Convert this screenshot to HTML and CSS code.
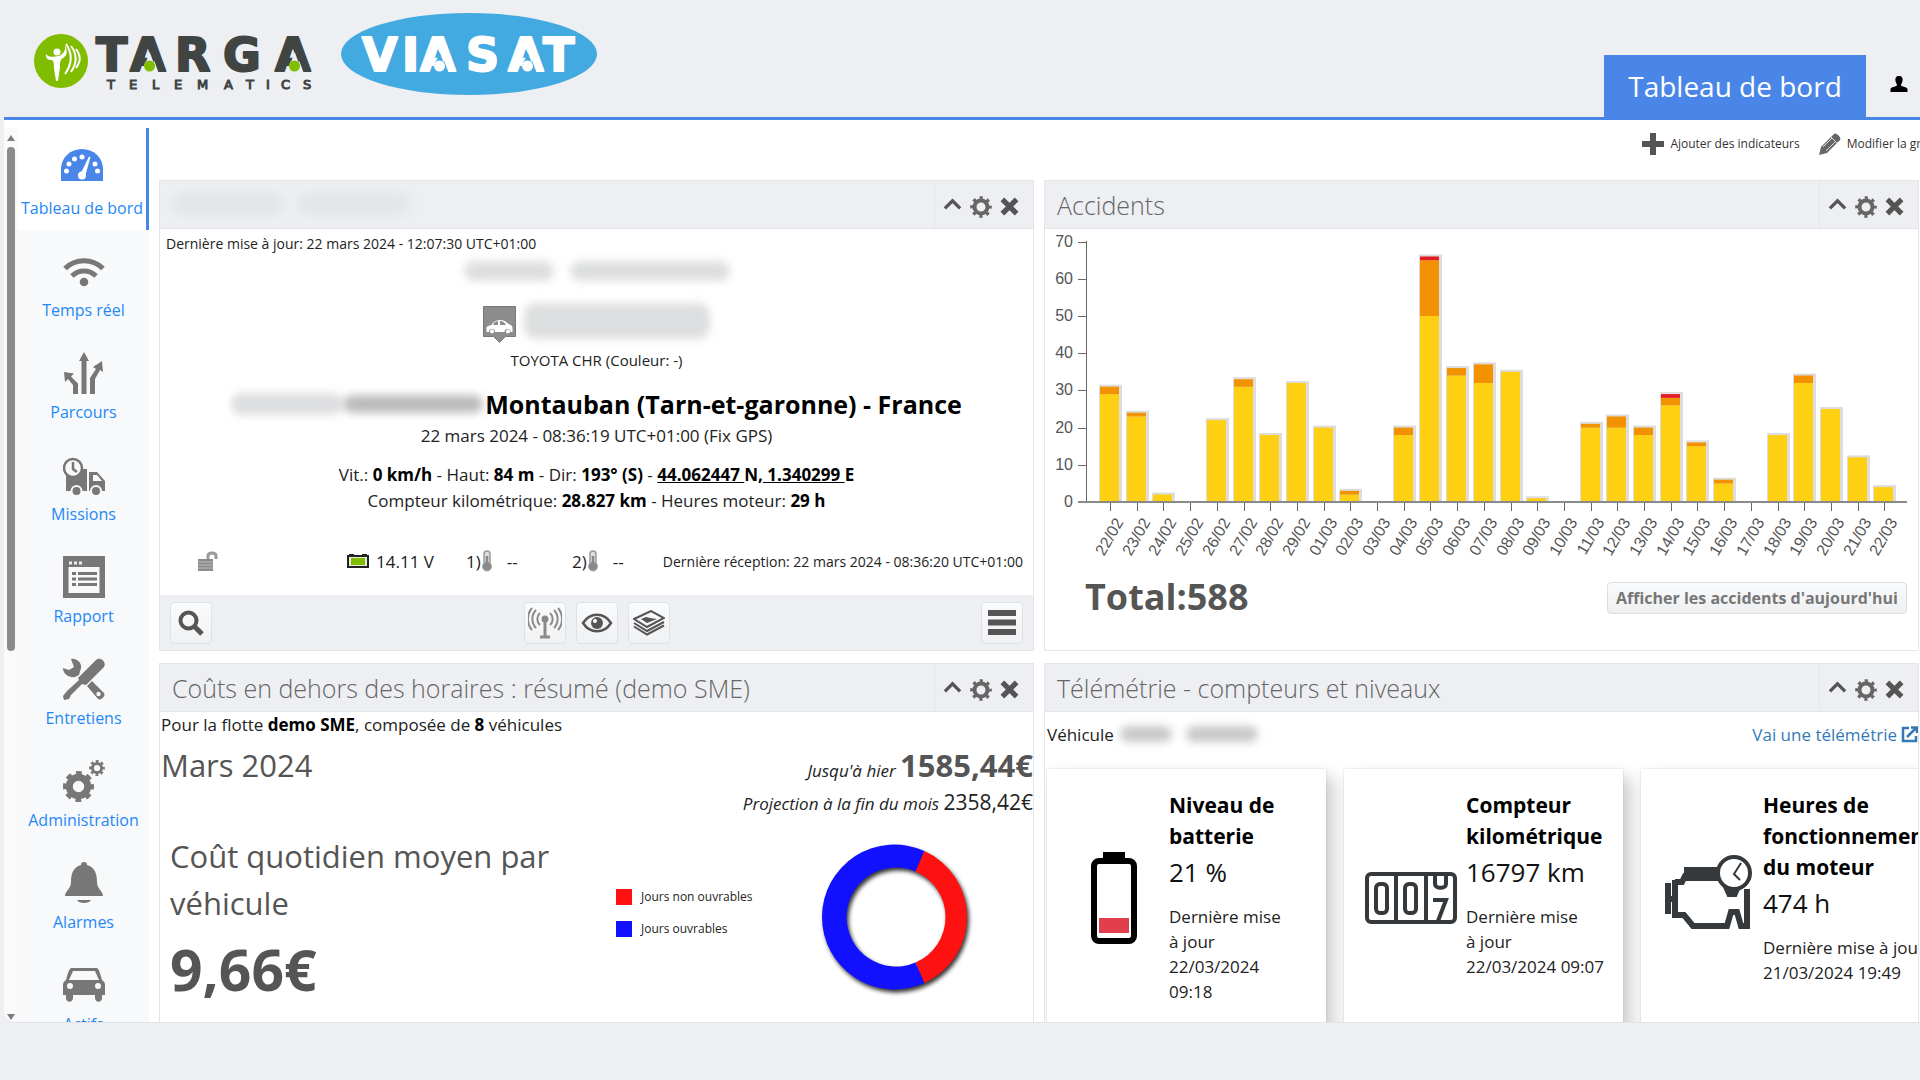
FILE: index.html
```html
<!DOCTYPE html>
<html lang="fr">
<head>
<meta charset="utf-8">
<title>Tableau de bord</title>
<link rel="stylesheet" href="styles.css">
</head>
<body>
<svg class="sprite" aria-hidden="true">
  <symbol id="i-up" viewBox="0 0 20 20"><path d="M2 12l8-8 8 8" fill="none" stroke="#555" stroke-width="3.500"/></symbol>
  <symbol id="i-close" viewBox="0 0 20 20"><path d="M2.500 2.500l15 15M17.500 2.500l-15 15" fill="none" stroke="#555" stroke-width="5.500"/></symbol>
  <symbol id="i-gear" viewBox="0 0 22 22"><circle cx="11" cy="11" r="6.500" fill="none" stroke="#666" stroke-width="4"/><circle cx="11" cy="11" r="9.300" fill="none" stroke="#666" stroke-width="3" stroke-dasharray="3.200 4.100" stroke-dashoffset="1.600"/></symbol>
  <symbol id="i-therm" viewBox="0 0 12 22"><rect x="3" y="1" width="6" height="15" rx="3" fill="#ddd" stroke="#999" stroke-width="1.500"/><circle cx="6" cy="16.500" r="4.500" fill="#888" stroke="#aaa"/><path d="M6 6v10" stroke="#888" stroke-width="2.500"/></symbol>
</svg>

<header class="topbar">
  <svg class="logos" viewBox="0 0 600 100" role="img" aria-label="Targa Telematics Viasat">
    <circle cx="61" cy="61" r="27" fill="#80bc00"/>
    <circle cx="57" cy="52" r="3.500" fill="#fff"/>
    <path d="M46 54c-1 5 3 6 6 6c2 1 2 5 2 9l2 12h2l2-14c0-5 0-7 3-9c4-2 5-7 2-13c1 6-2 9-6 11c-5 1-9 1-11 0z" fill="#fff"/>
    <path d="M66 44c7 10 6 20-1 30M71 46c7 9 6 17 0 26M76 49c5 7 5 12 0 19" fill="none" stroke="#fff" stroke-width="2"/>
    <text class="logo-word dark" x="96 130 175 223 275" y="71">TARGA</text>
    <path d="M141.500 72.500l4-11h9l4 11zM286.500 72.500l4-11h9l4 11zM146 62l3.700-10 3.700 10zM291 62l3.700-10 3.700 10z" fill="#edeff2"/>
    <circle cx="149.500" cy="66" r="5.500" fill="#80bc00"/><circle cx="294.500" cy="66" r="5.500" fill="#80bc00"/>
    <text class="logo-sub" x="107 129 152 174 197 224 246 266 281 303" y="89">TELEMATICS</text>
    <ellipse cx="469" cy="54" rx="128" ry="41" fill="#42a9e1"/>
    <text class="logo-word light" x="362 402 420 466 508 543" y="71">VIASAT</text>
    <path d="M431.500 72.500l4-11h9l4 11zM519.500 72.500l4-11h9l4 11zM436 62l3.700-10 3.700 10zM524 62l3.700-10 3.700 10z" fill="#42a9e1"/>
    <circle cx="439.500" cy="66" r="5.500" fill="#fff"/><circle cx="527.500" cy="66" r="5.500" fill="#fff"/>
  </svg>
  <nav class="topnav">
    <a class="tab" href="#dashboard">Tableau de bord</a>
    <button class="user" aria-label="Utilisateur"><svg width="18" height="18" viewBox="0 0 18 18"><path d="M9 1c3 0 4 2 3.500 5c-.3 2-1.500 3-1.500 4c0 2 6 1.500 6.500 4v3h-17v-3c.5-2.500 6.500-2 6.500-4c0-1-1.200-2-1.500-4C5 3 6 1 9 1z" fill="#000"/></svg></button>
  </nav>
</header>

<main class="app">
  <aside class="side">
    <div class="scroll"><span class="arrow up"></span><span class="thumb"></span><span class="arrow down"></span></div>
    <nav class="menu">
      <a class="item active" href="#dashboard"><svg viewBox="0 0 42 42" fill="#4a86e8"><path d="M0 33V21a21 20 0 0 1 42 0v12z"/><g fill="#fff"><circle cx="5.500" cy="23" r="2.500"/><circle cx="8" cy="16" r="2.500"/><circle cx="13.500" cy="11" r="2.500"/><circle cx="21" cy="9" r="2.500"/><circle cx="34" cy="16" r="2.500"/><circle cx="36.500" cy="23" r="2.500"/><path d="M28 8.500l1.500.5-5 18-5-1z"/><circle cx="21" cy="27.500" r="4"/></g></svg><span>Tableau de bord</span></a>
      <a class="item" href="#live"><svg viewBox="0 0 42 42" fill="none" stroke="#777" stroke-width="5"><path d="M2 18.500a27 27 0 0 1 38 0M9 26a17 17 0 0 1 24 0"/><circle cx="21" cy="32" r="4.300" fill="#777" stroke="none"/></svg><span>Temps réel</span></a>
      <a class="item" href="#trips"><svg viewBox="0 0 42 42" fill="#777"><path d="M18.500 42V9H16l5-9 5 9h-2.500v33zM10 42V33L5 27l-3 3-1-10 10 1.500-3 3 7 7V42zM27 42V26l6-9-3-2 9-6 1 11-3-2-5 9v15z"/></svg><span>Parcours</span></a>
      <a class="item" href="#missions"><svg viewBox="0 0 42 42" fill="#777"><path d="M3 15h21v22H3zM26 18h8l8 9v10H26z"/><path d="M30 21h4l5 6h-9z" fill="#f8f9fa"/><circle cx="10" cy="14" r="9" fill="#f8f9fa" stroke="#777" stroke-width="2.500"/><path d="M10 8v7l4 3" fill="none" stroke="#777" stroke-width="2.500"/><circle cx="13.500" cy="37" r="5" stroke="#f8f9fa" stroke-width="2"/><circle cx="33" cy="37" r="5" stroke="#f8f9fa" stroke-width="2"/></svg><span>Missions</span></a>
      <a class="item" href="#report"><svg viewBox="0 0 42 42" fill="#777"><path d="M0 0h42v42H0z"/><path d="M5.500 11h31v26h-31z" fill="#f8f9fa"/><path d="M6 5.500h3v3H6zM11 5.500h3v3h-3zM16 5.500h3v3h-3z" fill="#eee"/><path d="M9 16h4v3H9zM15 16h19v3H15zM9 21.500h4v3H9zM15 21.500h19v3H15zM9 27h4v3H9zM15 27h19v3H15z"/></svg><span>Rapport</span></a>
      <a class="item" href="#service"><svg viewBox="0 0 42 42" fill="#777"><path d="M8 1c6-1 11 4 10 9l-2 7-4 2C6 20 0 16 0 10l6 2 5-3zM24 28l5-5 12 12c2 3-3 8-6 6z"/><circle cx="35.500" cy="36" r="2.200" fill="#f8f9fa"/><path d="M15 20L33 2c4-4 11 2 8 7L23 27l-4-1L8 37l-2 4-5 1-1-4 4-5 12-11z"/></svg><span>Entretiens</span></a>
      <a class="item" href="#admin"><svg viewBox="0 0 42 42" fill="none" stroke="#777"><circle cx="15.500" cy="26.500" r="9.200" stroke-width="7"/><circle cx="15.500" cy="26.500" r="13" stroke-width="5" stroke-dasharray="5.500 4.710" stroke-dashoffset="2.750"/><circle cx="34" cy="8" r="4.600" stroke-width="3"/><circle cx="34" cy="8" r="6.600" stroke-width="2.600" stroke-dasharray="2.800 2.380" stroke-dashoffset="1.400"/></svg><span>Administration</span></a>
      <a class="item" href="#alarms"><svg viewBox="0 0 42 42" fill="#777"><path d="M21 0c2 0 3 1 3 3c8 2 10 9 10 17c0 7 6 9 6 14H2c0-5 6-7 6-14c0-8 2-15 10-17c0-2 1-3 3-3zM14 38h14c-2 4-12 4-14 0z"/></svg><span>Alarmes</span></a>
      <a class="item" href="#assets"><svg viewBox="0 0 42 42" fill="#777"><path d="M9 4h24c2 0 3 1 6 12c2 1 3 3 3 5v10h-3v3c0 5-7 5-7 0v-3H10v3c0 5-7 5-7 0v-3H0V21c0-2 1-4 3-5C6 5 7 4 9 4z"/><path d="M10 7h22l4 9H6z" fill="#f8f9fa"/><circle cx="7" cy="22" r="3" fill="#f8f9fa"/><circle cx="35" cy="22" r="3" fill="#f8f9fa"/></svg><span>Actifs</span></a>
    </nav>
  </aside>

  <div class="content">
    <div class="tools">
      <a href="#add"><svg width="22" height="22" viewBox="0 0 22 22"><path d="M8 0h6v8h8v6h-8v8H8v-8H0V8h8z" fill="#555"/></svg>Ajouter des indicateurs</a>
      <a class="edit" href="#grid"><svg width="22" height="22" viewBox="0 0 22 22"><path d="M0 22l2-8L15 1c2-2 8 4 6 6L8 20z" fill="#666"/><path d="M12 4l6 6M4 14l9-9M7 18l9-9" stroke="#ddd" fill="none"/></svg>Modifier la grille</a>
    </div>

    <div class="grid">
      <section class="card">
        <div class="head"><h2 class="masked"><i class="smudge"></i><i class="smudge"></i></h2><div class="acts"><button aria-label="Réduire"><svg><use href="#i-up"/></svg></button><button aria-label="Configurer"><svg class="gear"><use href="#i-gear"/></svg></button><button aria-label="Fermer"><svg><use href="#i-close"/></svg></button></div></div>
        <p class="updated">Dernière mise à jour: 22 mars 2024 - 12:07:30 UTC+01:00</p>
        <div class="hidden-name"><i class="smudge s-short"></i><i class="smudge"></i></div>
        <div class="plate"><svg width="33" height="38" viewBox="0 0 33 38"><path d="M.5.500h32v30h-10l-6 6-6-6H.500z" fill="#8d8d8d" stroke="#777"/><path d="M3.500 26v-4c0-2 2-2 5-3c3-6 12-7 17-1c3 1 4 2 4 4v4h-2a3 3 0 0 0-6 0H12a3 3 0 0 0-6 0z" fill="#fff"/><path d="M10 19c1-3 3-4 5-4v4zM17 15c3 0 4 1 6 4h-6z" fill="#8d8d8d"/><circle cx="9" cy="25.500" r="2" fill="#fff"/><circle cx="25" cy="25.500" r="2" fill="#fff"/></svg><i class="smudge"></i></div>
        <p class="model">TOYOTA CHR (Couleur: -)</p>
        <div class="address"><i class="smudge s-a"></i><i class="smudge s-b"></i><strong>Montauban (Tarn-et-garonne) - France</strong></div>
        <p class="fix">22 mars 2024 - 08:36:19 UTC+01:00 (Fix GPS)</p>
        <p class="stats">Vit.: <b>0 km/h</b> - Haut: <b>84 m</b> - Dir: <b>193° (S)</b> - <b><u>44.062447 </u>N,<u> 1.340299 </u>E</b><br>Compteur kilométrique: <b>28.827 km</b> - Heures moteur: <b>29 h</b></p>
        <div class="sensors">
          <span class="lock"><svg width="22" height="20" viewBox="0 0 22 20"><path d="M1 8h15v12H1z" fill="#8c8c8c"/><path d="M1 11h15M1 14h15M1 17h15" stroke="#bbb"/><path d="M11 8V5c0-4 8-4 8 0v3" fill="none" stroke="#999" stroke-width="3"/></svg></span>
          <span class="volt"><svg width="22" height="14" viewBox="0 0 22 14"><path d="M2 0h5v1h8V0h5v1h2v13H0V1h2z" fill="#222"/><path d="M2 3h18v9H2z" fill="#e8efd8"/><path d="M4 4h14v7H4z" fill="#80bc00"/></svg>14.11 V</span>
          <span class="temp">1)<svg><use href="#i-therm"/></svg><em>--</em></span>
          <span class="temp">2)<svg><use href="#i-therm"/></svg><em>--</em></span>
          <span class="recv">Dernière réception: 22 mars 2024 - 08:36:20 UTC+01:00</span>
        </div>
        <div class="foot">
          <button aria-label="Rechercher"><svg width="28" height="28" viewBox="0 0 28 28" fill="none" stroke="#555"><circle cx="11.500" cy="11.500" r="8" stroke-width="4"/><path d="M17 17l8 8" stroke-width="5"/></svg></button>
          <div class="mid">
            <button aria-label="Signal"><svg width="34" height="32" viewBox="0 0 34 32" fill="none" stroke="#8a8a8a" stroke-width="2"><path d="M17 13v16M12 30h10" stroke-width="3"/><circle cx="17" cy="12" r="2.500" fill="#888"/><path d="M12 18a8 8 0 0 1 0-12M22 18a8 8 0 0 0 0-12M8 21a13 13 0 0 1 0-18M26 21a13 13 0 0 0 0-18M4 23a17 17 0 0 1 0-22M30 23a17 17 0 0 0 0-22"/></svg></button>
            <button aria-label="Voir"><svg width="32" height="22" viewBox="0 0 32 22"><path d="M2 11c7-11 21-11 28 0c-7 11-21 11-28 0z" fill="none" stroke="#555" stroke-width="2.500"/><circle cx="16" cy="11" r="6" fill="#555"/><circle cx="14" cy="9" r="2" fill="#fff"/></svg></button>
            <button aria-label="Couches"><svg width="32" height="26" viewBox="0 0 32 26" fill="none" stroke="#555" stroke-width="2"><path d="M1 9l17-8 13 7-17 9z"/><path d="M1 13l13 8 17-9M1 16.500l13 8 17-9"/><path d="M8 9l5-2 4 1 7 1-10 4z" fill="#555" stroke="none"/></svg></button>
          </div>
          <button aria-label="Menu"><svg width="28" height="25" viewBox="0 0 28 25"><path d="M0 0h28v6H0zM0 9.500h28v6H0zM0 19h28v6H0z" fill="#555"/></svg></button>
        </div>
      </section>

      <section class="card">
        <div class="head"><h2>Accidents</h2><div class="acts"><button aria-label="Réduire"><svg><use href="#i-up"/></svg></button><button aria-label="Configurer"><svg class="gear"><use href="#i-gear"/></svg></button><button aria-label="Fermer"><svg><use href="#i-close"/></svg></button></div></div>
        <svg class="chart" id="chart" viewBox="0 0 873 344" role="img" aria-label="Accidents par jour"></svg>
        <div class="total"><strong>Total:588</strong><button>Afficher les accidents d'aujourd'hui</button></div>
      </section>

      <section class="card">
        <div class="head"><h2>Coûts en dehors des horaires : résumé (demo SME)</h2><div class="acts"><button aria-label="Réduire"><svg><use href="#i-up"/></svg></button><button aria-label="Configurer"><svg class="gear"><use href="#i-gear"/></svg></button><button aria-label="Fermer"><svg><use href="#i-close"/></svg></button></div></div>
        <p class="fleet">Pour la flotte <b>demo SME</b>, composée de <b>8</b> véhicules</p>
        <div class="month"><span class="name">Mars 2024</span><div class="sums"><p class="now"><i>Jusqu'à hier</i> <strong>1585,44€</strong></p><p class="proj"><i>Projection à la fin du mois</i> <span>2358,42€</span></p></div></div>
        <div class="daily">
          <div class="avg"><p>Coût quotidien moyen par véhicule</p><strong>9,66€</strong></div>
          <ul class="legend"><li><i class="red"></i>Jours non ouvrables</li><li><i class="blue"></i>Jours ouvrables</li></ul>
          <svg class="donut" width="160" height="160" viewBox="0 0 160 160"><path d="M108.500 14A72.500 72.500 0 1 0 108.500 146L99.500 125.500A49.500 49.500 0 1 1 99.500 34.500z" fill="#1111ff"/><path d="M108.500 14A72.500 72.500 0 0 1 108.500 146L99.500 125.500A49.500 49.500 0 0 0 99.500 34.500z" fill="#ff1111"/></svg>
        </div>
      </section>

      <section class="card">
        <div class="head"><h2>Télémétrie - compteurs et niveaux</h2><div class="acts"><button aria-label="Réduire"><svg><use href="#i-up"/></svg></button><button aria-label="Configurer"><svg class="gear"><use href="#i-gear"/></svg></button><button aria-label="Fermer"><svg><use href="#i-close"/></svg></button></div></div>
        <div class="vehicle"><span>Véhicule</span><i class="smudge s-v1"></i><i class="smudge s-v2"></i><a href="#telemetry">Vai une télémétrie<svg width="17" height="17" viewBox="0 0 17 17" fill="none" stroke="#337ab7" stroke-width="2.500"><path d="M8 2H2v13h13V10M6 11L15 2M10 1.500h6V7"/></svg></a></div>
        <div class="meters">
          <article class="meter">
            <div class="pic"><svg width="46" height="92" viewBox="0 0 46 92"><path d="M12 0h22v8H12z"/><rect x="3" y="9" width="40" height="80" rx="5" fill="#fff" stroke="#000" stroke-width="6"/><path d="M8 66h30v15H8z" fill="#e23f4c"/></svg></div>
            <div class="txt"><h3>Niveau de batterie</h3><p class="val">21 %</p><p>Dernière mise à jour 22/03/2024 09:18</p></div>
          </article>
          <article class="meter">
            <div class="pic"><svg width="92" height="52" viewBox="0 0 92 52" fill="none" stroke="#35393c" stroke-width="4"><rect x="2" y="2" width="88" height="48" rx="4"/><path d="M31 2v48M61 2v48"/><rect x="11" y="12" width="11" height="29" rx="4"/><rect x="40" y="12" width="11" height="29" rx="4"/><path d="M70 3v9c0 5 11 5 11 0V3M68 28h13l-8 21"/></svg></div>
            <div class="txt mid-txt"><h3>Compteur kilométrique</h3><p class="val">16797 km</p><p>Dernière mise<br>à jour<br>22/03/2024 09:07</p></div>
          </article>
          <article class="meter">
            <div class="pic engine"><svg width="88" height="74" viewBox="0 0 88 74" fill="none" stroke="#35393c" stroke-width="6"><path d="M4 28v31M4 44h7M11 25v35h9l9 11h34l4-14h6l4 14h6V34M11 27h7l3-6h33M20 15h36"/><path d="M20 22h34" stroke-width="8"/><path d="M60 32h16l-4 9h-8z" fill="#35393c" stroke-width="2"/><circle cx="70" cy="18" r="16" fill="#fff" stroke-width="4"/><path d="M77 8l-7 11 6 6" stroke-width="2"/></svg></div>
            <div class="txt wide"><h3>Heures de fonctionnement du moteur</h3><p class="val">474 h</p><p>Dernière mise à jour 21/03/2024 19:49</p></div>
          </article>
        </div>
      </section>
    </div>
  </div>
</main>
<script src="chart.js"></script>
</body>
</html>
```
FILE: styles.css
```css
* { box-sizing: border-box; }
body {
  margin: 0;
  height: 100vh;
  display: flex;
  flex-direction: column;
  overflow: hidden;
  padding-bottom: 57px;
  background: #edeff2;
  color: #222;
  font-family: "Open Sans", "Noto Sans", sans-serif;
  font-size: 17px;
  line-height: 25px;
}
p, h2, h3, ul { margin: 0; padding: 0; }
button { font: inherit; padding: 0; border: 0; background: none; }
a { color: inherit; text-decoration: none; }
svg { display: block; flex: none; }
.sprite { position: absolute; width: 0; height: 0; }

.topbar {
  flex: none;
  display: flex;
  justify-content: space-between;
  align-items: flex-end;
  height: 120px;
  margin-left: 4px;
  border-bottom: 3px solid #4a86e8;
}
.logos { width: 600px; height: 100px; align-self: flex-start; margin-left: -4px; }
.logo-word { font: bold 46px "DejaVu Sans", sans-serif; stroke-width: 2px; stroke-linejoin: round; }
.logo-word.dark { fill: #404443; stroke: #404443; }
.logo-word.light { fill: #fff; stroke: #fff; }
.logo-sub { font: 13px "DejaVu Sans", sans-serif; fill: #404443; stroke: #404443; }
.topnav { display: flex; align-items: center; }
.tab {
  width: 262px;
  padding: 12px 0;
  text-align: center;
  background: #4a86e8;
  color: #fff;
  font-size: 28px;
  line-height: 38px;
}
.user { padding: 0 12px 4px 24px; }

.app {
  flex: 1;
  min-height: 0;
  display: flex;
  overflow: hidden;
  margin-left: 4px;
  background: #fff;
  border-bottom: 1px solid #e2e3e5;
  border-bottom-left-radius: 10px;
}
.side { flex: none; display: flex; padding-top: 8px; }
.scroll {
  width: 14px;
  display: flex;
  flex-direction: column;
  align-items: center;
  padding: 7px 0 2px;
  background: #fafafa;
}
.arrow { border: 4px solid transparent; }
.arrow.up { border-bottom: 6px solid #7d7d7d; border-top: 0; margin-bottom: 6px; }
.arrow.down { border-top: 6px solid #7d7d7d; border-bottom: 0; margin-top: auto; }
.thumb { width: 8px; height: 57%; border-radius: 4px; background: #8b8b8b; }
.menu { width: 131px; overflow: hidden; background: #f8f9fa; }
.item {
  display: flex;
  flex-direction: column;
  align-items: center;
  gap: 6px;
  height: 102px;
  padding-top: 20px;
  color: #1e88f7;
  font-size: 16px;
  line-height: 24px;
  white-space: nowrap;
}
.item svg { width: 42px; height: 42px; }
.item.active { background: #fff; border-right: 3px solid #4a86e8; }

.content { flex: 1; min-width: 0; padding: 0 1px 0 10px; }
.tools {
  display: flex;
  justify-content: flex-end;
  gap: 19px;
  height: 60px;
  padding-top: 12px;
  margin-right: -18px;
  color: #333;
  font-size: 12px;
  line-height: 24px;
  white-space: nowrap;
}
.tools a { display: flex; align-items: center; gap: 6px; height: 24px; }

.grid { display: grid; grid-template-columns: minmax(0, 1fr) minmax(0, 1fr); gap: 12px 10px; }
.card { border: 1px solid #e4e5e7; overflow: hidden; background: #fff; }
.head {
  display: flex;
  justify-content: space-between;
  height: 48px;
  background: #edeff2;
  border-bottom: 1px solid #e4e5e7;
}
.head h2 {
  padding-left: 12px;
  color: #666;
  font-size: 25px;
  font-weight: 300;
  line-height: 48px;
}
.acts {
  display: flex;
  align-items: center;
  gap: 8px;
  width: 99px;
  padding: 4px 0 0 8px;
  border-left: 1px solid #e4e5e7;
}
.acts svg { width: 19px; height: 19px; }
.acts svg.gear { width: 22px; height: 22px; }

.smudge { display: block; flex: none; border-radius: 12px; background: #dddedf; filter: blur(4px); }
.masked { display: flex; gap: 14px; padding-top: 12px; }
.masked .smudge { width: 112px; height: 22px; background: #e4e5e7; }
.updated { padding: 5px 0 0 6px; font-size: 14px; line-height: 20px; }
.hidden-name { display: flex; justify-content: center; gap: 16px; margin-top: 7px; }
.hidden-name .smudge { width: 160px; height: 20px; }
.hidden-name .s-short { width: 90px; }
.plate { display: flex; align-items: center; justify-content: center; gap: 8px; margin-top: 17px; }
.plate svg { margin-top: 8px; }
.plate .smudge { width: 186px; height: 36px; }
.model { margin-top: 4px; text-align: center; font-size: 15px; line-height: 24px; }
.address { display: flex; align-items: center; justify-content: center; margin-top: 14px; color: #000; line-height: 36px; white-space: nowrap; }
.address strong { font-size: 25px; }
.s-a { width: 112px; height: 22px; }
.s-b { width: 140px; height: 18px; background: #bcbcbc; margin-right: 2px; }
.fix { margin-top: 2px; text-align: center; line-height: 24px; }
.stats { margin-top: 14px; text-align: center; line-height: 26px; }
b { color: #000; }
.sensors { display: flex; align-items: center; height: 24px; margin: 35px 10px 22px 37px; white-space: nowrap; }
.sensors span { flex: none; }
.lock { width: 150px; }
.volt { display: flex; align-items: center; gap: 7px; width: 119px; }
.temp { display: flex; align-items: center; width: 106px; }
.temp + .temp { width: 80px; }
.temp svg { width: 12px; height: 22px; }
.temp em { font-style: normal; margin-left: 14px; }
.sensors .recv { margin-left: auto; font-size: 14px; }
.foot { display: flex; align-items: center; justify-content: space-between; height: 55px; padding: 0 10px; background: #edeff2; }
.foot button {
  display: flex;
  align-items: center;
  justify-content: center;
  width: 42px;
  height: 42px;
  border: 1px solid #dfe1e4;
  border-radius: 4px;
  background: linear-gradient(#fafbfc, #f0f1f3);
}
.foot .mid { display: flex; gap: 10px; }

.chart { width: 100%; height: auto; font: 16px "Liberation Sans", sans-serif; fill: #555; }
.chart .axis { stroke: #666; stroke-width: 1; fill: none; }
.chart .base { stroke: #8a8a8a; stroke-width: 2; }
.chart .shade { fill: #ddd; }
.chart .low { fill: #ffcf11; }
.chart .medium { fill: #f39200; }
.chart .high { fill: #e31b23; }
.total { display: flex; align-items: center; justify-content: space-between; height: 48px; padding: 0 11px 0 40px; margin-bottom: 29px; }
.total strong { color: #555; font-size: 36px; line-height: 48px; }
.total button {
  width: 300px;
  height: 32px;
  margin-top: 2px;
  border: 1px solid #dcdee1;
  border-radius: 4px;
  background: linear-gradient(#fafbfc, #eeeff1);
  color: #777;
  font-size: 16px;
  font-weight: 700;
  white-space: nowrap;
}

.fleet { padding: 1px 0 0 1px; line-height: 24px; }
.fleet, .month, .vehicle { white-space: nowrap; }
.month { display: flex; justify-content: space-between; margin-top: 7px; padding-left: 1px; }
.month .name { color: #555; font-size: 31px; line-height: 42px; }
.sums { text-align: right; }
.now { height: 42px; line-height: 42px; }
.now strong { color: #555; font-size: 31px; }
.proj { height: 32px; line-height: 32px; }
.proj span { font-size: 21px; }
.daily { display: flex; margin-top: 15px; padding-left: 10px; }
.avg { width: 446px; color: #555; }
.avg p { max-width: 420px; font-size: 31px; line-height: 47px; }
.avg strong { display: block; font-size: 57px; line-height: 84px; }
.legend { width: 200px; padding-top: 52px; font-size: 12px; line-height: 24px; list-style: none; }
.legend li { display: flex; align-items: center; gap: 9px; margin-bottom: 8px; }
.legend i { width: 16px; height: 16px; }
.red { background: #ff1111; }
.blue { background: #1111ff; }
.donut { margin-top: 4px; filter: drop-shadow(2px 3px 2px #333); }

.vehicle { display: flex; align-items: center; height: 57px; padding: 0 0 13px 2px; }
.vehicle .smudge { height: 16px; background: #c9c9c9; }
.s-v1 { width: 52px; margin-left: 6px; }
.s-v2 { width: 72px; margin-left: 14px; }
.vehicle a { display: flex; align-items: center; gap: 4px; margin-left: auto; color: #337ab7; }
.meters { display: flex; gap: 18px; padding-left: 2px; }
.meter { flex: none; display: flex; width: 279px; height: 300px; background: #fff; box-shadow: 8px 8px 16px rgba(0, 0, 0, .2), 0 0 2px rgba(0, 0, 0, .15); }
.pic { flex: none; display: flex; align-items: center; justify-content: center; width: 122px; height: 258px; padding-left: 12px; }
.pic.engine { height: 246px; }
.txt { width: 122px; padding-top: 21px; flex: none; }
.mid-txt { width: 142px; }
.wide { width: 176px; }
.txt h3 { color: #000; font-size: 21px; line-height: 31px; }
.txt .val { margin-bottom: 12px; color: #111; font-size: 26px; line-height: 40px; }
```
FILE: chart.js
```js
// Daily accidents by severity: [date, low, medium, high]
const days = [
  ["22/02", 29, 2, 0], ["23/02", 23, 1, 0], ["24/02", 2, 0, 0], ["25/02", 0, 0, 0],
  ["26/02", 22, 0, 0], ["27/02", 31, 2, 0], ["28/02", 18, 0, 0], ["29/02", 32, 0, 0],
  ["01/03", 20, 0, 0], ["02/03", 2, 1, 0], ["03/03", 0, 0, 0], ["04/03", 18, 2, 0],
  ["05/03", 50, 15, 1], ["06/03", 34, 2, 0], ["07/03", 32, 5, 0], ["08/03", 35, 0, 0],
  ["09/03", 1, 0, 0], ["10/03", 0, 0, 0], ["11/03", 20, 1, 0], ["12/03", 20, 3, 0],
  ["13/03", 18, 2, 0], ["14/03", 26, 2, 1], ["15/03", 15, 1, 0], ["16/03", 5, 1, 0],
  ["17/03", 0, 0, 0], ["18/03", 18, 0, 0], ["19/03", 32, 2, 0], ["20/03", 25, 0, 0],
  ["21/03", 12, 0, 0], ["22/03", 4, 0, 0]
];
const base = 273, unit = 3.72, left = 41, first = 65, step = 26.7;
let out = "";
for (let v = 0; v <= 70; v += 10) {
  const y = Math.round(base - v * unit) + 0.5;
  out += `<path class="axis" d="M${left - 8} ${y}h8"/><text x="28" y="${y + 4}" text-anchor="end">${v}</text>`;
}
out += `<path class="axis" d="M${left + 0.5} 12V${base}"/>`;
days.forEach(([label, ...parts], i) => {
  const x = Math.round(first + i * step);
  const sum = parts.reduce((a, b) => a + b, 0);
  if (sum) out += `<rect class="shade" x="${x - 11}" y="${base - sum * unit - 2}" width="23" height="${sum * unit + 2}"/>`;
  let y = base;
  parts.forEach((n, k) => {
    if (!n) return;
    y -= n * unit;
    out += `<rect class="${["low", "medium", "high"][k]}" x="${x - 10}" y="${y}" width="19" height="${n * unit}"/>`;
  });
  out += `<path class="axis" d="M${x + 0.5} ${base}v9"/>`;
  out += `<text transform="translate(${x + 14} ${base + 20}) rotate(-60)" text-anchor="end">${label}</text>`;
});
out += `<path class="base" d="M${left - 8} ${base}H862"/>`;
document.getElementById("chart").innerHTML = out;
```
